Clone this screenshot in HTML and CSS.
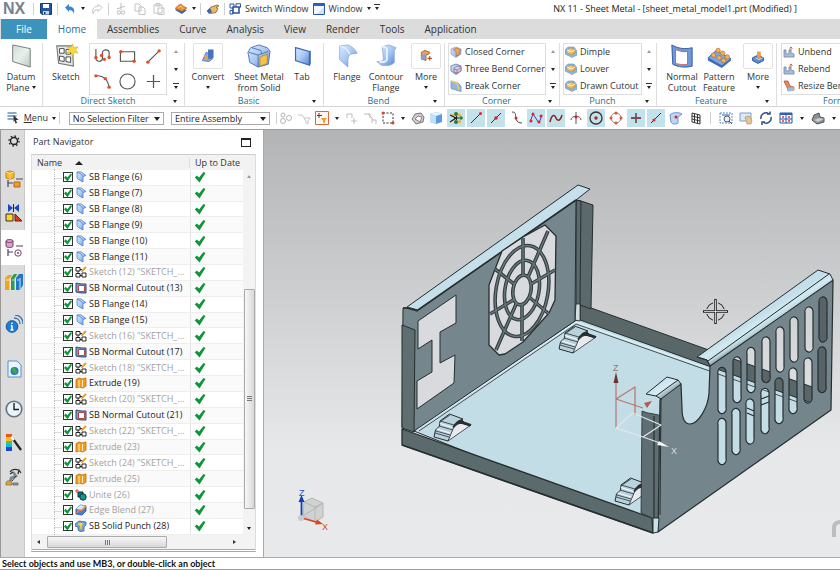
FILE: index.html
```html
<!DOCTYPE html>
<html lang="en">
<head>
<meta charset="utf-8">
<title>NX 11 - Sheet Metal</title>
<link rel="stylesheet" href="styles.css">
</head>
<body>
<svg class="defs" aria-hidden="true">
  <defs>
    <linearGradient id="blue" x1="0" y1="0" x2="1" y2="1"><stop offset="0" stop-color="#dceaff"/><stop offset=".5" stop-color="#a9c8f2"/><stop offset="1" stop-color="#5583d3"/></linearGradient>
    <linearGradient id="gold" x1="0" y1="0" x2="1" y2="1"><stop offset="0" stop-color="#fde7a0"/><stop offset="1" stop-color="#e39a2c"/></linearGradient>
    <linearGradient id="glass" x1="0" y1="0" x2="1" y2="1"><stop offset="0" stop-color="#cfdcd6"/><stop offset=".5" stop-color="#eaf0ec"/><stop offset="1" stop-color="#b9c9c0"/></linearGradient>
  </defs>
  <symbol id="i-flange" viewBox="0 0 12 12"><path d="M2 1 6 .8l5 3.700-3 1V11L3.500 8.500 2 7z" fill="url(#blue)" stroke="#4a83d4" stroke-width=".8"/><path d="M2 1 6 3l2 2.500" fill="none" stroke="#2f6bc4" stroke-width=".6"/></symbol>
  <symbol id="i-sketch" viewBox="0 0 12 12"><path d="M1 1.500h4v3.500H1zM1 7.500h4V11H1zM7 7h4v4H7zM5 3.500h2M3 5v2.500M5 9.500h2" fill="#fff" stroke="#222"/><path d="m7 5 4-4" stroke="#e5a020" stroke-width="2"/><path d="m6.500 5.500 1-.5" stroke="#c33"/></symbol>
  <symbol id="i-cutout" viewBox="0 0 12 12"><path d="M1 1c4 1 6 1 10 1v9c-4 0-7 0-10-1z" fill="#7f9fd2" stroke="#27477e"/><path d="M3.500 3.500h6v6h-6z" fill="#fff" stroke="#b04840"/></symbol>
  <symbol id="i-extrude" viewBox="0 0 12 12"><path d="M1 2.500 4 1l3 1 4-1v8l-3 2-4-1-3 1z" fill="#f39a1c" stroke="#c36d06" stroke-width=".8"/><path d="M4 3v7M7.500 3v7" stroke="#fff0c0" stroke-width="1"/></symbol>
  <symbol id="i-unite" viewBox="0 0 12 12"><path d="M3 3h5v5H3z" fill="#12706e" stroke="#063c40"/><circle cx="8" cy="8" r="3.200" fill="#179492" stroke="#063c40"/><path d="M2 0v4M0 2h4" stroke="#d44"/></symbol>
  <symbol id="i-blend" viewBox="0 0 12 12"><path d="m1 5 4-4 6 1v5l-4 4-6-1z" fill="#4a7de0" stroke="#274c9c" stroke-width=".8"/><path d="m1 5 4-4 6 1-4 4z" fill="#d8e6ff"/><path d="M2 9c1-3 3-3 5-3l4-4" fill="none" stroke="#f08a20" stroke-width="1.500"/></symbol>
  <symbol id="i-punch" viewBox="0 0 12 12"><path d="m0 4 4-3 7 1v3L9 7v4l-4 .5L3 10V7L0 6z" fill="#6ea6ea" stroke="#2e62ad" stroke-width=".8"/><path d="m2 4 3-1.500 4 1L7 5.500v4l-2-.5V6z" fill="#f8d568" stroke="#b98a20" stroke-width=".5"/></symbol>
  <symbol id="i-tick" viewBox="0 0 12 12"><path d="m.8 6.500 2-2 2.200 2L9.500 1l2 1-6 9.500z" fill="#11953a"/></symbol>
  <symbol id="i-corner" viewBox="0 0 12 12"><path d="m1 3 5-2 5 2v5l-5 3.500L1 8z" fill="url(#blue)" stroke="#8aa6d8" stroke-width=".8"/><path d="M3 3.500 7 2l4 2-2 2v3L6.500 10 6 6z" fill="#eda45a" stroke="#b8672c" stroke-width=".6"/></symbol>
  <symbol id="i-stamp" viewBox="0 0 12 12"><path d="m0 4 3-3h6l3 4v4l-5 2.500L0 8z" fill="#8cb5e4" stroke="#6b95cc" stroke-width=".6"/><path d="m2 4 4-2 4 2v3L6.500 9 2 7z" fill="url(#gold)" stroke="#b98b3a" stroke-width=".6"/><path d="m2 4 4.500 2L10 4" fill="none" stroke="#fff6cf"/></symbol>
  <symbol id="i-bend" viewBox="0 0 12 12"><path d="M1 4v7h10V8l-3-1V4H6v4H3V4z" fill="#aabfe0" stroke="#6f82a8" stroke-width=".8"/><path d="M8 4V.8M6.500 2.500 8 1l1.500 1.500" fill="none" stroke="#d9663c"/></symbol>
  <symbol id="lug" viewBox="0 0 40 30" overflow="visible">
    <path d="m1 23 1.500-7 4-4L7 7l9.500-7L30 5l-4 2-5 8-1 3-5 9z" fill="#b9d2db" stroke="#263033" stroke-width="1"/>
    <path d="m15 27 5-12c2-4 4-7 8-6l10 2z" fill="#e9eaf0" stroke="#263033" stroke-width=".8"/>
    <path d="m7 7 14 4M6 12l14 4M3 17l14 4M2 19l14 4M8 7l9-6" fill="none" stroke="#263033" stroke-width=".8"/>
    <path d="m7 9.500 12 4M4 15l13 4" stroke="#f2fbff" stroke-width="1.300"/>
    <path d="M20 13c2-4 5-7 9-7l2 2 7 2.500-1 1.500-8-2.500c-3-.5-6 1-8 4z" fill="#263033"/>
  </symbol>
</svg>

<header class="titlebar">
  <strong class="brand">NX</strong><span class="rule"></span>
  <button class="tb" aria-label="Save"><svg viewBox="0 0 12 12"><path d="M.5.5h11v11H2L.5 10z" fill="#2257a5" stroke="#143b78"/><path d="M3 1h6v4H3z" fill="#fff"/><path d="M3 8h6v3.500H3z" fill="#c7d6ea"/><path d="M4 9h1.500v2H4z" fill="#143b78"/></svg></button><span class="rule"></span>
  <button class="tb" aria-label="Undo"><svg viewBox="0 0 12 12"><path d="m1 4.500 4-3.500v2.500c4 0 6 2 5 7.500C9 8 8 7 5 7v2z" fill="#3b86d2"/></svg></button><i class="caret"></i>
  <button class="tb" aria-label="Redo"><svg viewBox="0 0 12 12"><path d="m11 4.500-4-3v2c-4 0-6 2-5 7 1-3 2-4 5-4v2z" fill="none" stroke="#c4c4c4"/></svg></button><span class="rule"></span>
  <button class="tb" aria-label="Cut"><svg viewBox="0 0 12 12" fill="none" stroke="#bdbdbd"><path d="M6 0v7M2 6l8-3"/><circle cx="4" cy="9.500" r="1.700"/><circle cx="8" cy="9.500" r="1.700"/></svg></button>
  <button class="tb" aria-label="Copy"><svg viewBox="0 0 12 12" fill="#fff" stroke="#c4c4c4"><path d="M1 1h4l2 2v5H1zM5 4h4l2 2v5.500H5z"/></svg></button>
  <button class="tb" aria-label="Paste"><svg viewBox="0 0 12 12" fill="#fff" stroke="#c4c4c4"><path d="M1 2h8v8H1zM3 .5h4V3H3zM5 5h6v6.500H5z"/></svg></button>
  <button class="tb push" aria-label="Command finder"><svg viewBox="0 0 12 12"><path d="m0 7 4-2 8 2-5 4z" fill="#3567b0"/><path d="m0 5.500 3-3L6 1l2 2 4 2-5 3.500z" fill="#eb8a2a" stroke="#b85f12" stroke-width=".6"/><path d="m3 5 3-2 2 3" fill="none" stroke="#ffd48c"/></svg></button><i class="caret"></i><span class="rule"></span>
  <button class="tb" aria-label="Touch mode"><svg viewBox="0 0 12 12"><path d="m0 8 4-4 6-2 2 1-3 1.500 2 1-2 4-5 1z" fill="#eab766" stroke="#73501e" stroke-width=".7"/><path d="m0 8 3-3 2 4-3 2z" fill="#3e65a8"/></svg></button><span class="rule"></span>
  <button class="named"><svg viewBox="0 0 12 12" fill="#fff" stroke="#2b56a0"><path d="M1 1h4v4H1zM7 .8h4.500v3.500H7zM1 7.500h3V11H1z"/><path d="M4 4h6v6H4z" stroke-width="1.600"/></svg>Switch Window</button>
  <button class="named"><svg viewBox="0 0 12 12"><path d="M.5.500h11v11H.5z" fill="#f4f8ff" stroke="#2a55a6"/><path d="M.5.500h11v2.500H.5z" fill="#2a62c4"/><path d="M11 4v7H4z" fill="#cfe0f7"/></svg>Window<i class="caret"></i><i class="caret bar"></i></button>
  <h1>NX 11 - Sheet Metal - [sheet_metal_model1.prt (Modified) ]</h1>
</header>

<nav class="tabs">
  <button class="file">File</button><button class="active">Home</button><button>Assemblies</button><button>Curve</button><button>Analysis</button><button>View</button><button>Render</button><button>Tools</button><button>Application</button>
</nav>

<section class="ribbon">
  <div class="group datum"><div class="body">
    <button class="big"><svg viewBox="0 0 26 26"><path d="M4 1l19 4v20L4 19z" fill="url(#glass)" stroke="#6c7a73"/></svg><span>Datum<br>Plane <i class="caret"></i></span></button>
  </div></div>
  <div class="group direct"><div class="body">
    <button class="big"><svg viewBox="0 0 26 26"><path d="M3 2h17l1 22-16-3z" fill="#e4e8e8" stroke="#777" stroke-width="1.200"/><path d="M6 5h5v5H6zM13 6h5v5h-5zM6 13l5 1v5l-5-1zM13 14h5v6l-5-1z" fill="#fff" stroke="#444"/><path d="m20 0 1.500 4L26 3l-2.500 3.500L26 10l-4-1-2 4-1.500-4L14 10l2.500-3.500L14 3l4 1z" fill="#f8d93c" stroke="#d8a722" stroke-width=".6"/></svg><span>Sketch</span></button>
    <div class="gallery">
      <button aria-label="Profile"><svg viewBox="0 0 18 18" fill="none" stroke="#555" stroke-width="1.200"><path d="M2 1v9a3.500 3.500 0 0 0 7 1V5c0-4 7-4 7 0v6"/><g fill="#e0502c" stroke="none"><circle cx="2" cy="10" r="1.800"/><circle cx="8" cy="8" r="1.800"/><circle cx="11" cy="12" r="1.800"/><circle cx="16" cy="10" r="1.800"/></g></svg></button>
      <button aria-label="Rectangle"><svg viewBox="0 0 18 18" fill="none" stroke="#555" stroke-width="1.200"><path d="M1.500 4h15v10h-15z"/><g fill="#e0502c" stroke="none"><circle cx="2" cy="4" r="1.800"/><circle cx="16" cy="14" r="1.800"/></g></svg></button>
      <button aria-label="Line"><svg viewBox="0 0 18 18" fill="none" stroke="#555" stroke-width="1.200"><path d="M3 15 15 3"/><g fill="#e0502c" stroke="none"><circle cx="3" cy="15" r="1.800"/><circle cx="15" cy="3" r="1.800"/></g></svg></button>
      <button aria-label="Arc"><svg viewBox="0 0 18 18" fill="none" stroke="#555" stroke-width="1.200"><path d="M2 3c8-1 13 4 14 13"/><g fill="#e0502c" stroke="none"><circle cx="2" cy="3" r="1.800"/><circle cx="12" cy="6" r="1.800"/><circle cx="16" cy="15" r="1.800"/></g></svg></button>
      <button aria-label="Circle"><svg viewBox="0 0 18 18" fill="none" stroke="#555" stroke-width="1.200"><circle cx="9" cy="9" r="8"/></svg></button>
      <button aria-label="Point"><svg viewBox="0 0 18 18" fill="none" stroke="#555" stroke-width="1.300"><path d="M9 2v14M2 9h14"/></svg></button>
    </div>
    <div class="scroll"><i class="caret up"></i><i class="caret"></i><i class="caret bar"></i></div>
  </div><footer><span>Direct Sketch</span><i class="caret"></i></footer></div>
  <div class="group basic"><div class="body">
    <button class="big framed"><svg viewBox="0 0 26 26"><path d="m7 18 4-9 5 2 2 5-4 3z" fill="#90a9da" stroke="#5b78b5"/><path d="M13 6h6v9l-6 2z" fill="#4474c0"/><path d="m8 11 5 3 1 4-4-2z" fill="#e5a050"/></svg><span>Convert<br><i class="caret"></i></span></button>
    <button class="big"><svg viewBox="0 0 26 26"><path d="m1 9 3-5 9-3 9 3 3 4-2 14-11 3L3 20z" fill="url(#blue)" stroke="#4c72b8"/><path d="m2 9 10 3 11-4M12 12v13M5 4l10 3 1 4" fill="none" stroke="#4c72b8"/><path d="m14 14 8-3v10l-8 3z" fill="#f5c34c" stroke="#bd8a28"/></svg><span>Sheet Metal<br>from Solid</span></button>
    <button class="big"><svg viewBox="0 0 26 26"><path d="m6 4 15 4v15L6 18z" fill="url(#blue)" stroke="#3a6abb" stroke-width="1.300"/><path d="m21 8 1.500-1v15L21 23" fill="#3767b3"/></svg><span>Tab</span></button>
  </div><footer><span>Basic</span><i class="caret"></i></footer></div>
  <div class="group bend"><div class="body">
    <button class="big"><svg viewBox="0 0 26 26"><path d="m5 2 9-1c4 1 8 5 10 9l-7 1c-2 1-3 3-3 7v7l-9-8z" fill="url(#blue)" stroke="#7f9fce" stroke-width=".7"/><path d="M5 2c4 0 9 4 11 9" fill="none" stroke="#e8f2ff" stroke-width="1.500"/></svg><span>Flange</span></button>
    <button class="big"><svg viewBox="0 0 26 26"><path d="m9 3 7-2 8 3-2 3v13c-2 3-8 4-14 3l-5-4c6 0 8-1 7-5z" fill="url(#blue)" stroke="#7f9fce" stroke-width=".7"/><path d="M9 3c4 0 6 2 5 5v8c0 4-5 4-8 3" fill="none" stroke="#e8f2ff" stroke-width="2"/></svg><span>Contour<br>Flange</span></button>
    <button class="big framed"><svg viewBox="0 0 26 26"><path d="M8 9l4-2 5 2-1 2-3 1v6l-5-2z" fill="#f0a155" stroke="#a15f25"/><path d="m8 13 4-3v6l-4 2z" fill="#7fa4da"/><path d="M17 13v5M14.500 15.500h5" stroke="#c54f22" stroke-width="1.300"/></svg><span>More<br><i class="caret"></i></span></button>
  </div><footer><span>Bend</span><i class="caret"></i></footer></div>
  <div class="group corner"><div class="body">
    <div class="list">
      <button><svg><use href="#i-corner"/></svg>Closed Corner</button>
      <button><svg viewBox="0 0 12 12"><path d="m1 3 5-2 5 2v5l-5 3.500L1 8z" fill="url(#blue)" stroke="#6d8cc8"/><path d="m4 5 3-2 4 1v4l-4 2-3-1z" fill="#c6d4ef" stroke="#9a6a7c" stroke-width=".8"/><path d="m4 6 3 1 4-2M7 7v3" fill="none" stroke="#b46b62" stroke-width=".8"/></svg>Three Bend Corner</button>
      <button><svg viewBox="0 0 12 12"><path d="m1 1 7 2 3 3v5.500L1 8.500z" fill="#8fb6e6" stroke="#6a94ca" stroke-width=".8"/><path d="m1 1 6 2 2 7" fill="none" stroke="#f1c766" stroke-width="1.500"/></svg>Break Corner</button>
    </div><div class="scroll"><i class="caret up"></i><i class="caret"></i><i class="caret bar"></i></div>
  </div><footer><span>Corner</span><i class="caret"></i></footer></div>
  <div class="group punch"><div class="body">
    <div class="list">
      <button><svg><use href="#i-stamp"/></svg>Dimple</button>
      <button><svg><use href="#i-stamp"/></svg>Louver</button>
      <button><svg><use href="#i-stamp"/></svg>Drawn Cutout</button>
    </div><div class="scroll"><i class="caret up"></i><i class="caret"></i><i class="caret bar"></i></div>
  </div><footer><span>Punch</span><i class="caret"></i></footer></div>
  <div class="group feature"><div class="body">
    <button class="big"><svg viewBox="0 0 26 26"><path d="M2 1c7 4 14 5 22 3v20c-8 2-15 1-21-2z" fill="#6f98d8" stroke="#2f5596"/><path d="M6 6c5 2 9 3 13 2v14c-4 1-9 0-13-1z" fill="#fff" stroke="#b6665c"/></svg><span>Normal<br>Cutout</span></button>
    <button class="big"><svg viewBox="0 0 26 26"><path d="m1 15 9-8 16 9-10 8z" fill="#7da5e4" stroke="#3a64ab"/><path d="m1 15 15 8 10-7v2l-10 8L1 18z" fill="#3d6cbb"/><g fill="#f0b159" stroke="#b3702a" stroke-width=".7"><circle cx="7" cy="12" r="2.400"/><circle cx="12" cy="7" r="2.400"/><circle cx="13" cy="15" r="2.400"/><circle cx="17" cy="10" r="2.400"/><circle cx="18" cy="18" r="2.400"/><circle cx="22" cy="14" r="2.400"/></g></svg><span>Pattern<br>Feature</span></button>
    <button class="big framed"><svg viewBox="0 0 26 26"><path d="m7 15 6-3 6 3v3l-6 3-6-3z" fill="#5c8bd2" stroke="#31589c"/><path d="M12 8h4v8h-4z" fill="#f29a3c"/><path d="m10 15 4 2 4-2" fill="none" stroke="#c9dcf8"/></svg><span>More<br><i class="caret"></i></span></button>
  </div><footer><span>Feature</span><i class="caret"></i></footer></div>
  <div class="group form"><div class="body">
    <div class="list">
      <button><svg><use href="#i-bend"/></svg>Unbend</button>
      <button><svg><use href="#i-bend"/></svg>Rebend</button>
      <button><svg viewBox="0 0 12 12"><path d="M1 1c1 4 4 6 4 10l6-1V7L7 6 5 1z" fill="#e9885c" stroke="#a5502c" stroke-width=".7"/><path d="m5 8 6-1v4H5z" fill="#9db9e2"/></svg>Resize Bend</button>
    </div>
  </div><footer><span>Forming</span></footer></div>
</section>

<section class="toolbar">
  <button class="menu"><svg viewBox="0 0 12 12"><path d="M0 1h9M0 4h9M0 7h6" stroke="#8aa9cf" stroke-width="2"/><path d="m6 3 5 5H8.500l1 3-1.500.5-1-3L6 10z" fill="#333"/></svg><span><u>M</u>enu</span><i class="caret"></i></button><span class="rule"></span>
  <label class="pick filter"><select aria-label="Selection filter"><option>No Selection Filter</option></select></label>
  <label class="pick scope"><select aria-label="Selection scope"><option>Entire Assembly</option></select></label>
  <span class="rule"></span>
  <div class="tools early">
    <button aria-label="Interpart"><svg viewBox="0 0 14 14" fill="none" stroke="#b5b5b5"><circle cx="4" cy="4" r="2"/><circle cx="4" cy="10" r="2.500"/><circle cx="10" cy="7" r="2.500"/></svg></button>
    <button aria-label="Reset filter"><svg viewBox="0 0 14 14" fill="none" stroke="#c5c5c5"><path d="M1 4h4l2 3M7 7h6l-2 3v3l-2-1v-2z"/></svg></button>
    <button aria-label="General selection"><svg viewBox="0 0 14 14"><path d="M.5.500h13v13H.5z" fill="#fff7f0" stroke="#d7684a"/><path d="M4 2v5M2 4.500h5" stroke="#6e3430"/><path d="M6 7h6l-2 2.500v3l-2-1v-2z" fill="#f29d27"/></svg></button><i class="caret"></i>
    <button aria-label="Find"><svg viewBox="0 0 14 14" fill="none" stroke="#bdbdbd"><path d="M2 7V3h5v4M9 7v6M6 10h6"/></svg></button>
    <button aria-label="Deselect"><svg viewBox="0 0 14 14" fill="none" stroke="#bdbdbd"><path d="M1 3h6v4M5 3l4 4v5M9 9h4v4"/></svg></button>
    <button aria-label="Rectangle select"><svg viewBox="0 0 14 14" fill="none" stroke="#333"><path d="M2 2h10v10H2z" stroke-dasharray="2 1.500"/><g fill="#d94a2c" stroke="none"><circle cx="2" cy="2" r="1.500"/><circle cx="12" cy="12" r="1.500"/></g></svg></button><i class="caret"></i>
    <button aria-label="Wireframe"><svg viewBox="0 0 14 14"><path d="m1 8 3-5 6-1 3 4-1 5-7 2z" fill="#c9d0da" stroke="#777"/><path d="m4 8 3-3 4 1-2 5z" fill="#fff" stroke="#a57070"/></svg></button>
    <button aria-label="Shaded"><svg viewBox="0 0 14 14"><path d="m1 3 7-2 5 2v8l-6 2-6-2z" fill="#5c9ae2"/><path d="m1 3 6 2v8l-6-2z" fill="#bfe0fb"/><path d="m1 3 7-2 5 2-6 2z" fill="#e6f4ff"/></svg></button>
  </div>
  <div class="tools snaps">
    <button class="on" aria-label="Enable snap"><svg viewBox="0 0 14 14"><g fill="#2b7a3c"><circle cx="7" cy="3" r="2"/><circle cx="12" cy="7" r="1.800"/><circle cx="7" cy="11" r="2"/></g><g fill="#e7b426"><circle cx="4" cy="4.500" r="1.600"/><circle cx="10.500" cy="4" r="1.600"/><circle cx="10.500" cy="10.500" r="1.600"/></g><path d="m1 4 6 3-6 4M5 7h5M7.500 5v4" fill="none" stroke="#222" stroke-width="1.200"/></svg></button>
    <button class="on" aria-label="End point"><svg viewBox="0 0 14 14"><path d="M2 12 12 2" stroke="#333"/><circle cx="11.500" cy="2.500" r="1.500" fill="#d23"/></svg></button>
    <button class="on" aria-label="Mid point"><svg viewBox="0 0 14 14"><path d="M2 12 12 2" stroke="#333"/><circle cx="7" cy="7" r="1.800" fill="#d23"/></svg></button>
    <button aria-label="Control point"><svg viewBox="0 0 14 14" fill="none"><path d="M3 1c5 0 3 4 4 7s3 4 6 4" stroke="#444"/><circle cx="7" cy="7" r="1.500" fill="#d23"/></svg></button>
    <button class="on" aria-label="Intersection"><svg viewBox="0 0 14 14" fill="none"><path d="m1 11 3-8 6 9 3-8" stroke="#5636a0"/><g fill="#d23"><circle cx="4" cy="3" r="1.500"/><circle cx="2" cy="10" r="1.500"/><circle cx="10" cy="11" r="1.500"/><circle cx="12" cy="5" r="1.500"/></g></svg></button>
    <button class="on" aria-label="Point on curve"><svg viewBox="0 0 14 14" fill="none"><path d="M1 11C3 2 6 4 7 7s4 4 6-3" stroke="#8b2320" stroke-width="1.500"/></svg></button>
    <button aria-label="Pole"><svg viewBox="0 0 14 14" fill="none"><path d="M2 9c0-5 10-5 10 0M7 1v12" stroke="#555"/><circle cx="7" cy="6" r="1.500" fill="#d23"/></svg></button>
    <button class="on" aria-label="Arc center"><svg viewBox="0 0 14 14" fill="none"><circle cx="7" cy="7" r="6" stroke="#333" stroke-width="1.300"/><circle cx="7" cy="7" r="1.700" fill="#a22"/></svg></button>
    <button aria-label="Quadrant"><svg viewBox="0 0 14 14" fill="none"><circle cx="7" cy="7" r="5" stroke="#888"/><g fill="#dc5038"><circle cx="7" cy="2" r="1.500"/><circle cx="7" cy="12" r="1.500"/><circle cx="2" cy="7" r="1.500"/><circle cx="12" cy="7" r="1.500"/></g></svg></button>
    <button class="on" aria-label="Existing point"><svg viewBox="0 0 14 14"><path d="M7 2v10M2 7h10" stroke="#333" stroke-width="1.300"/><circle cx="7" cy="7" r="1.300" fill="#d23"/></svg></button>
    <button class="on" aria-label="On curve"><svg viewBox="0 0 14 14"><path d="M2 12 12 2" stroke="#333"/><circle cx="5" cy="9" r="1.500" fill="#d23"/></svg></button>
    <button aria-label="On face"><svg viewBox="0 0 14 14"><path d="M1 4c3-3 8-3 12-1l-4 3v6c-3 2-6 1-7-1z" fill="#bcd6f2" stroke="#6b92c7"/><circle cx="7" cy="6" r="1.500" fill="#d23"/></svg></button>
    <button aria-label="Grid point"><svg viewBox="0 0 14 14" fill="none" stroke="#333"><path d="m3 2 8 2v9l-8-2zM5.500 2.500v9M8.500 3v9.500M3 5l8 2M3 8l8 2"/></svg></button>
  </div>
  <span class="rule"></span>
  <div class="tools view">
    <button aria-label="Fit"><svg viewBox="0 0 14 14" fill="none"><path d="M1 2h12v10H1z" stroke="#5c8ac8" stroke-dasharray="2 1"/><path d="M3 3h8v2H3z" fill="#8ab0de"/><circle cx="8" cy="8" r="3" stroke="#555" fill="#e8f2fb"/><path d="m10 10 3 3" stroke="#555"/></svg></button>
    <button aria-label="Pan"><svg viewBox="0 0 14 14"><path d="M1 2h11v8H1z" fill="#dce9f6" stroke="#7ba0cc"/><path d="m6 6 4-1 3 4-1 4H8z" fill="#e9c48b" stroke="#a48a5c" stroke-width=".6"/></svg></button>
    <button aria-label="Rotate"><svg viewBox="0 0 14 14" fill="none" stroke="#2d4e8e" stroke-width="1.500"><path d="M2 8a5 5 0 0 1 8-5M12 6a5 5 0 0 1-8 5M8 3h3V.500M6 11H3v3"/></svg></button>
    <button aria-label="View orientation"><svg viewBox="0 0 14 14"><path d="M1 2h12v10H1z" fill="#fff" stroke="#2a55a6"/><path d="M1 2h12v2H1z" fill="#2a62c4"/><path d="M7 4v8M1 8h12" stroke="#2a55a6"/><path d="M3 6h2M9 6h2M3 10h2M9 10h2" stroke="#d33" stroke-width="1.500"/></svg></button><i class="caret"></i>
    <button aria-label="Render style"><svg viewBox="0 0 14 14"><path d="m1 9 2-5 5-2 1 4 4 1v4l-7 2z" fill="#8a9095" stroke="#555"/><path d="m3 9 5-2 5 1-6 3z" fill="#c8cdd0"/></svg></button><i class="caret"></i>
  </div>
</section>

<main>
  <aside class="rail">
    <button aria-label="Options"><svg viewBox="0 0 18 18" fill="none" stroke="#222"><circle cx="9" cy="9" r="3.500" stroke-width="1.400"/><circle cx="9" cy="9" r="5" stroke-dasharray="1.600 2.300" stroke-width="1.300"/></svg></button>
    <button aria-label="Assembly navigator"><svg viewBox="0 0 18 18"><path d="m1 2 4-1 4 1v6l-4 1-4-1z" fill="#f3b826" stroke="#c58b0c"/><path d="m1 2 4 1.500L9 2M5 4v5" stroke="#ffe48a" fill="none"/><path d="M3 10v7M3 13h5M11 9h7" stroke="#446" stroke-width="1.200"/><path d="M9 12h6v5H9z" fill="#f09c22" stroke="#b36c0a"/></svg></button>
    <button aria-label="Constraint navigator"><svg viewBox="0 0 18 18"><path d="M3 0v8l5-4zM14 0v8L9 4z" fill="#1a47c6"/><path d="M8.500 0v8" stroke="#222"/><path d="M1 10h7v7H1z" fill="#f9d72c" stroke="#333"/><path d="m10 10 7 7h-7z" fill="#db3a22" stroke="#701a10"/></svg></button>
    <button class="current" aria-label="Part navigator"><svg viewBox="0 0 18 18"><path d="M1 2c0-2 7-2 7 0v5c0 2-7 2-7 0z" fill="#d6a2c6" stroke="#7b3c6c"/><path d="M1 2c0 2 7 2 7 0" fill="none" stroke="#7b3c6c"/><path d="M3 10v7M3 13h5M11 7h7" stroke="#446" stroke-width="1.200"/><circle cx="13" cy="14" r="3.200" fill="#fff" stroke="#7b3c6c"/><circle cx="13" cy="14" r="1" fill="#7b3c6c"/></svg></button>
    <button class="library" aria-label="Reuse library"><svg viewBox="0 0 18 18"><path d="m0 5 3-3h4L5 5v12H0z" fill="#f0a31e"/><path d="m6 5 3-4h3L10 5v12H6z" fill="#2f9b4e"/><path d="m11 5 3-4h4v11l-3 5h-4z" fill="#2178c8"/><path d="M1 7h3M7 7h2M12 7h2M5 5v12M10 5v12M15 5v12" stroke="#fff" stroke-width=".8"/></svg></button>
    <button class="tall" aria-label="HD3D tools"><svg viewBox="0 0 18 18" fill="none"><circle cx="7" cy="11.500" r="5.800" fill="#1e7cd2" stroke="#0f549c"/><path d="M7 10.500V15M5.500 15h3M5.800 10.500H7M6.300 8.200h1.400" stroke="#fff" stroke-width="1.500"/><path d="M9 3c3 0 6 2 6 6M10 0c5 0 8 4 8 9" stroke="#3b6fa8" stroke-width="1.300"/></svg></button>
    <button class="mid" aria-label="Web browser"><svg viewBox="0 0 18 18"><path d="M3 1h9l4 4v12H3z" fill="#eaf4ff" stroke="#5b8fca"/><circle cx="9.500" cy="11" r="4" fill="#2a72c6"/><path d="M7 9c2-3 4 0 5 2s-2 4-3 2-2 0-2-4z" fill="#3ea84c"/></svg></button>
    <button class="mid" aria-label="History"><svg viewBox="0 0 18 18" fill="none"><circle cx="9" cy="9" r="7.800" fill="#e8f3fb" stroke="#66727e" stroke-width="1.600"/><path d="M9 3v6.500h5" stroke="#222" stroke-width="1.400"/></svg></button>
    <button class="short" aria-label="System materials"><svg viewBox="0 0 18 18"><path d="M1 0h6v4H1z" fill="#e52"/><path d="M1 3h6v4H1z" fill="#fb2"/><path d="M1 7h6v3H1z" fill="#4c4"/><path d="M1 10h6v4H1z" fill="#1bd"/><path d="M1 13h6v4H1z" fill="#24c"/><path d="m8 5 8 11" stroke="#222" stroke-width="2.200"/><path d="m6 3 3 3" stroke="#fff" stroke-width="2"/></svg></button>
    <button class="mid" aria-label="Process studio"><svg viewBox="0 0 18 18" fill="none"><path d="m5 15 1-5 5-2-3-4" stroke="#7b8792" stroke-width="2.500"/><path d="M5 4c2-3 6-3 9-2l2 3M8 4l-3 2M14 2l-1 4" stroke="#333" stroke-width="1.300"/><path d="M11 8 7 13" stroke="#333" stroke-width="1"/><path d="M1 15c0-3 6-3 6 0v2H1z" fill="#e0a03a" stroke="#7a6a50" stroke-width=".7"/><path d="M8 15h5v2H8z" fill="#99a4ae" stroke="#555" stroke-width=".7"/></svg></button>
  </aside>

  <section class="navigator">
    <header><h2>Part Navigator</h2><button class="restore" aria-label="Restore"></button></header>
    <div class="frame">
      <div class="head"><span>Name <i class="sort"></i></span><span>Up to Date</span></div>
      <div class="scroller">
        <table>
          <tbody>
            <tr><td><label><input type="checkbox" checked><svg><use href="#i-flange"/></svg>SB Flange (6)</label></td><td><svg><use href="#i-tick"/></svg></td></tr>
            <tr><td><label><input type="checkbox" checked><svg><use href="#i-flange"/></svg>SB Flange (7)</label></td><td><svg><use href="#i-tick"/></svg></td></tr>
            <tr><td><label><input type="checkbox" checked><svg><use href="#i-flange"/></svg>SB Flange (8)</label></td><td><svg><use href="#i-tick"/></svg></td></tr>
            <tr><td><label><input type="checkbox" checked><svg><use href="#i-flange"/></svg>SB Flange (9)</label></td><td><svg><use href="#i-tick"/></svg></td></tr>
            <tr><td><label><input type="checkbox" checked><svg><use href="#i-flange"/></svg>SB Flange (10)</label></td><td><svg><use href="#i-tick"/></svg></td></tr>
            <tr><td><label><input type="checkbox" checked><svg><use href="#i-flange"/></svg>SB Flange (11)</label></td><td><svg><use href="#i-tick"/></svg></td></tr>
            <tr class="dim"><td><label><input type="checkbox" checked><svg><use href="#i-sketch"/></svg>Sketch (12) "SKETCH_...</label></td><td><svg><use href="#i-tick"/></svg></td></tr>
            <tr><td><label><input type="checkbox" checked><svg><use href="#i-cutout"/></svg>SB Normal Cutout (13)</label></td><td><svg><use href="#i-tick"/></svg></td></tr>
            <tr><td><label><input type="checkbox" checked><svg><use href="#i-flange"/></svg>SB Flange (14)</label></td><td><svg><use href="#i-tick"/></svg></td></tr>
            <tr><td><label><input type="checkbox" checked><svg><use href="#i-flange"/></svg>SB Flange (15)</label></td><td><svg><use href="#i-tick"/></svg></td></tr>
            <tr class="dim"><td><label><input type="checkbox" checked><svg><use href="#i-sketch"/></svg>Sketch (16) "SKETCH_...</label></td><td><svg><use href="#i-tick"/></svg></td></tr>
            <tr><td><label><input type="checkbox" checked><svg><use href="#i-cutout"/></svg>SB Normal Cutout (17)</label></td><td><svg><use href="#i-tick"/></svg></td></tr>
            <tr class="dim"><td><label><input type="checkbox" checked><svg><use href="#i-sketch"/></svg>Sketch (18) "SKETCH_...</label></td><td><svg><use href="#i-tick"/></svg></td></tr>
            <tr><td><label><input type="checkbox" checked><svg><use href="#i-extrude"/></svg>Extrude (19)</label></td><td><svg><use href="#i-tick"/></svg></td></tr>
            <tr class="dim"><td><label><input type="checkbox" checked><svg><use href="#i-sketch"/></svg>Sketch (20) "SKETCH_...</label></td><td><svg><use href="#i-tick"/></svg></td></tr>
            <tr><td><label><input type="checkbox" checked><svg><use href="#i-cutout"/></svg>SB Normal Cutout (21)</label></td><td><svg><use href="#i-tick"/></svg></td></tr>
            <tr class="dim"><td><label><input type="checkbox" checked><svg><use href="#i-sketch"/></svg>Sketch (22) "SKETCH_...</label></td><td><svg><use href="#i-tick"/></svg></td></tr>
            <tr class="dim"><td><label><input type="checkbox" checked><svg><use href="#i-extrude"/></svg>Extrude (23)</label></td><td><svg><use href="#i-tick"/></svg></td></tr>
            <tr class="dim"><td><label><input type="checkbox" checked><svg><use href="#i-sketch"/></svg>Sketch (24) "SKETCH_...</label></td><td><svg><use href="#i-tick"/></svg></td></tr>
            <tr class="dim"><td><label><input type="checkbox" checked><svg><use href="#i-extrude"/></svg>Extrude (25)</label></td><td><svg><use href="#i-tick"/></svg></td></tr>
            <tr class="dim"><td><label><input type="checkbox" checked><svg><use href="#i-unite"/></svg>Unite (26)</label></td><td><svg><use href="#i-tick"/></svg></td></tr>
            <tr class="dim"><td><label><input type="checkbox" checked><svg><use href="#i-blend"/></svg>Edge Blend (27)</label></td><td><svg><use href="#i-tick"/></svg></td></tr>
            <tr><td><label><input type="checkbox" checked><svg><use href="#i-punch"/></svg>SB Solid Punch (28)</label></td><td><svg><use href="#i-tick"/></svg></td></tr>
          </tbody>
        </table>
        <div class="vbar"><i class="caret up"></i><div class="thumb"></div><i class="caret"></i></div>
      </div>
      <div class="hbar"><i class="caret left"></i><div class="thumb"></div><i class="caret right"></i></div>
    </div>
  </section>

  <section class="viewport">
    <svg viewBox="264 130 576 427" preserveAspectRatio="xMinYMin meet" stroke-linejoin="round" role="img" aria-label="Sheet metal model">
      <defs>
        <linearGradient id="lip" gradientUnits="userSpaceOnUse" x1="765" y1="312" x2="774" y2="326"><stop offset="0" stop-color="#c4dfe9"/><stop offset=".4" stop-color="#d3eaf2"/><stop offset=".7" stop-color="#bcd6df"/><stop offset="1" stop-color="#74878d"/></linearGradient>
        <linearGradient id="lip2" gradientUnits="userSpaceOnUse" x1="658" y1="382" x2="668" y2="396"><stop offset="0" stop-color="#c4dfe9"/><stop offset=".5" stop-color="#d8edf4"/><stop offset="1" stop-color="#7d9198"/></linearGradient>
        <g id="grille">
          <ellipse cx="522" cy="291" rx="26" ry="46" transform="rotate(10 522 291)"/>
          <ellipse cx="522" cy="290" rx="17" ry="30" transform="rotate(10 522 290)"/>
          <ellipse cx="522" cy="290" rx="9" ry="15" transform="rotate(10 522 290)"/>
          <path d="M523 238v38M522 304v37M548 231l-20 46M517 302l-21 48M495 269l19 15M529 297l20 17M555 270l-24 14M490 314l25-15"/>
        </g>
      </defs>
      <g stroke="#252e30">
        <path d="M580 304 815 388v20L580 321z" fill="#5a6769"/>
        <path d="M815 280h14v128h-14z" fill="#566467" stroke="none"/>
        <path d="m414 431 161-110 5-1 243 87-166 121z" fill="#c3dde7"/>
        <path d="m419 431 157-107 250 88" fill="none" stroke-width=".8"/>
        <path d="m416 430 160-108 131 46" fill="none" stroke="#dceff6" stroke-width="1.500"/>
        <path d="m576 200 5 1 12 4-2 104-11-4-4 15z" fill="#5b696c"/>
        <path d="m576 200 5 1-1 104" fill="none"/>
        <path d="M576 304h4v17l-5-1z" fill="#d5e0e4" stroke-width=".8"/>
        <path d="M403 308h14l159-108-1 121-161 110-12-4z" fill="#75868c"/>
        <path d="m402 325 13 5-1 102-12-4z" fill="#5f6e71"/>
        <path d="m407 307 171-122 12 4-14 11-158 110z" fill="#c5e0ea"/>
        <path d="m418 310 158-110" stroke-width="1.600"/>
        <path d="M403 308h4l11 3" fill="none" stroke-width="1.500"/>
        <path d="m418 321 38-26v28l-16 9v31l15-8-1 28-37 26v-28l15-9v-32l-14 9z" fill="#d9dadd"/>
        <path d="m502 251 21-14 22-12 11 11-1 64-6 13-26 29-18 12-6 1-10-10v-60z" fill="#d9dadd" stroke-width="1.300"/>
        <use href="#grille" fill="none" stroke="#323c3f" stroke-width="3.600"/>
        <use href="#grille" fill="none" stroke="#66767a" stroke-width="1.500"/>
        <use href="#lug" x="433" y="414" width="40" height="30"/>
        <use href="#lug" x="558" y="326" width="40" height="30"/>
        <use href="#lug" x="614" y="478" width="40" height="30"/>
        <path d="m402 429 250 89 1 15-251-88z" fill="#5b6a6c" stroke-width="1.300"/>
        <path d="m402 445 251 88" stroke-width="1.600"/>
        <path d="m642 411 6 2 12 2-1 103-7 0-11-5z" fill="#5f6e72" stroke-width=".8"/>
        <path d="M654 416v101" stroke-width="1.200"/>
        <path d="m646 402 14-6v19l-17-6z" fill="#c3dde7" stroke="none"/>
        <path fill-rule="evenodd" stroke-width="1.200" fill="#74858b" d="M660 400 665 394 681 384 682 408C682 416 684 424 690 424 698 424 708 408 709 393L710 366 833 280 831 410 658 532Z
          M718 374v36a4 5 0 0 0 8-3v-36a4 5 0 0 0-8 3z M733 363v36a4 5 0 0 0 8-3v-35a4 5 0 0 0-8 2z M747 354v35a4 5 0 0 0 8-3v-35a4 5 0 0 0-8 3z M762 343v36a4 5 0 0 0 8-3v-35a4 5 0 0 0-8 2z M776 333v35a4 5 0 0 0 8-2v-35a4 5 0 0 0-8 2z M790 323v35a4 5 0 0 0 8-2v-35a4 5 0 0 0-8 2z M805 313v35a4 5 0 0 0 8-2v-35a4 5 0 0 0-8 2z M819 303v35a4 5 0 0 0 8-2v-35a4 5 0 0 0-8 2z
          M718 425v36a4 5 0 0 0 8-3v-36a4 5 0 0 0-8 3z M732 415v36a4 5 0 0 0 8-3v-36a4 5 0 0 0-8 3z M746 405v35a4 5 0 0 0 8-2v-35a4 5 0 0 0-8 2z M761 395v35a4 5 0 0 0 8-3v-35a4 5 0 0 0-8 3z M775 384v36a4 5 0 0 0 8-3v-35a4 5 0 0 0-8 2z M789 374v36a4 5 0 0 0 8-3v-35a4 5 0 0 0-8 2z M804 364v35a4 5 0 0 0 8-2v-35a4 5 0 0 0-8 2z M818 353v36a4 5 0 0 0 8-3v-35a4 5 0 0 0-8 2z"/>
        <path d="m747 408 7 3m-7 2 7 3m7-17 8-3m-8 9 8-3" fill="none" stroke-width="1.200"/>
        <path d="m697 357 121-87 12 4 3 6-123 86-3-6z" fill="url(#lip)"/>
        <path d="m697 357 10 3 3 6m-2-5 121-87" fill="none"/>
        <path d="m646 394 21-17 11 3 3 4-20 15-5-3z" fill="url(#lip2)"/>
        <path d="m656 396 22-16M661 399l-1 116" fill="none"/>
        <path d="M653 518h6l-1 14-5 1z" fill="#c8e2ec"/>
      </g>
      <g fill="none" stroke-width="1.200">
        <path d="M616 428v-45M616 399l19-12v28M616 399l27 9" stroke="#b5766e"/>
        <path d="m616 428 17-15 28 12-18 12zM643 437l17 6" stroke="#e3e7ea"/>
        <path d="m616 372-2.500 11h5z" fill="#6c3430" stroke="none"/>
        <path d="m652 401-8 2 3 5z" fill="#b5594c" stroke="none"/>
        <path d="m669 447-12-2 2-4z" fill="#f4f4f4" stroke="none"/>
      </g>
      <g class="axis"><text x="613" y="371" fill="#8f7771">Z</text><text x="671" y="454" fill="#d7dcdf">X</text></g>
      <g fill="none" stroke="#222">
        <path d="M715.500 299v25M703 311.500h25" stroke-width="2.500"/><path d="M715.500 300v23M704 311.500h23" stroke="#eee" stroke-width=".8"/>
        <circle cx="715.500" cy="311.500" r="9" stroke-dasharray="9 5.100" stroke-dashoffset="-2.500"/>
      </g>
      <g fill="none">
        <path d="m304 502 8-4 11 5v14l-8 5-12-6z" fill="#cfd2d1" stroke="#b3b7b5"/><path d="m304 502 11 5 8-4M315 507v15M303 516l19-12" stroke="#b3b7b5"/>
        <path d="M301.500 518v-17" stroke="#143eb0" stroke-width="1.800"/><path d="m301.500 495-3 7h6z" fill="#143eb0"/>
        <path d="m302 518 14 4" stroke="#dc4322" stroke-width="1.800"/><path d="m323 524-8 .5 2-5z" fill="#dc4322"/><circle cx="301" cy="518" r="3" fill="#c9cbcc"/>
      </g>
      <g class="axis"><text x="299" y="496" fill="#2450c0">Z</text><text x="322" y="530" fill="#dc4322">X</text></g>
      <path d="M834 537v-9c0-4 2-6 8-6" fill="none" stroke="#bcbdbf" stroke-width="4"/>
    </svg>
  </section>
</main>
<footer class="status">Select objects and use MB3, or double-click an object</footer>
</body>
</html>
```
FILE: styles.css
```css
* { box-sizing: border-box; }
body {
  margin: 0;
  height: 100vh;
  display: flex;
  flex-direction: column;
  overflow: hidden;
  background: #fff;
  color: #333;
  font: 9px/10px "Open Sans", "Noto Sans", sans-serif;
}
button {
  display: flex;
  align-items: center;
  justify-content: center;
  margin: 0;
  padding: 0;
  border: 0;
  background: none;
  color: inherit;
  font: inherit;
}
h1, h2 { margin: 0; font: inherit; }
.defs { position: absolute; width: 0; height: 0; }
.rule { flex: none; width: 1px; height: 12px; background: #d0d0d0; }
.caret {
  flex: none;
  display: inline-block;
  border: 2px solid transparent;
  border-top: 3px solid #222;
  border-bottom: 0;
}
.caret.up { border-top: 0; border-bottom: 3px solid #999; }
.caret.left { border: 2px solid transparent; border-right: 3px solid #333; border-left: 0; }
.caret.right { border: 2px solid transparent; border-left: 3px solid #333; border-right: 0; }
.caret.bar { position: relative; }
.caret.bar::before { content: ""; position: absolute; left: -3px; top: -6px; width: 6px; height: 1px; background: #333; }

.titlebar { flex: none; display: flex; align-items: center; gap: 4px; height: 19px; padding: 0 43px 2px 3px; white-space: nowrap; }
.brand { width: 26px; color: #75838d; font: bold 16px/17px "Liberation Sans", sans-serif; }
.tb svg, .named svg { width: 12px; height: 12px; }
.tb { width: 15px; }
.tb.push { margin-left: 3px; }
.named { gap: 4px; }
.titlebar h1 { margin-left: auto; color: #222; }

.tabs { flex: none; display: flex; height: 20px; padding-left: 1px; background: #dcdcdc; font-size: 10px; }
.tabs button { padding: 0 10px; }
.tabs .file { width: 46px; background: #3e93bc; color: #fff; }
.tabs .active { width: 50px; padding: 0; background: #fff; color: #1d6f98; }

.ribbon {
  flex: none;
  display: grid;
  grid-template-columns: 43px 142px 139px 121px 115px 97px 120px 1fr;
  height: 68px;
  padding: 4px 0 2px;
  overflow: hidden;
  border-bottom: 1px solid #d4d4d4;
}
.group { display: flex; flex-direction: column; min-width: 0; border-right: 1px solid #dedede; }
.group .body { display: grid; height: 53px; }
.group footer { display: flex; align-items: center; height: 10px; color: #27708f; }
.group footer span { flex: 1; text-align: center; }
.group footer .caret { margin-right: 7px; }
.datum .body { grid-template-columns: 1fr; }
.direct .body { grid-template-columns: 46px 78px 1fr; }
.basic .body { grid-template-columns: 46px 56px 30px; }
.bend .body { grid-template-columns: 36px 42px 38px; padding-left: 5px; }
.feature .body { grid-template-columns: 34px 40px 38px; padding-left: 8px; }
.corner .body, .punch .body { grid-template-columns: 1fr 14px; padding-left: 3px; }
.form .body { grid-template-columns: 90px; padding-left: 4px; }
.form { border: 0; }
.form footer span { flex: none; padding-left: 46px; }
.big { flex-direction: column; justify-content: flex-start; gap: 2px; line-height: 11px; white-space: nowrap; }
.big svg { width: 24px; height: 26px; }
.big.framed svg { width: 30px; border: 1px solid #e2e2e2; border-radius: 2px; }
.big .caret { vertical-align: 2px; }
.gallery { display: grid; grid-template-columns: repeat(3, 1fr); height: 52px; border: 1px solid #dedede; }
.gallery svg { width: 17px; height: 17px; }
.scroll { display: flex; flex-direction: column; align-items: center; justify-content: space-between; padding: 7px 0; }
.list { height: 52px; display: grid; grid-template-rows: repeat(3, 1fr); border: 1px solid #dedede; }
.list button { justify-content: flex-start; gap: 3px; padding-left: 1px; white-space: nowrap; }
.list svg { flex: none; width: 12px; height: 12px; }

.toolbar { flex: none; display: flex; align-items: center; height: 23px; border-bottom: 1px solid #9c9c9c; }
.menu { gap: 4px; width: 51px; margin-left: 6px; }
.menu svg { width: 13px; height: 12px; }
.menu + .rule { margin: 0 9px 0 2px; }
.pick { position: relative; margin-right: 7px; }
.pick::after { content: ""; position: absolute; right: 4px; top: 5px; border: 3px solid transparent; border-top: 4px solid #222; border-bottom: 0; pointer-events: none; }
.pick select { display: block; width: 100%; height: 13px; padding: 0 3px; border: 1px solid #aaa; border-radius: 0; appearance: none; background: #fff; color: #222; font: inherit; line-height: 11px; }
.filter { width: 96px; }
.scope { width: 100px; margin-right: 6px; }
.tools { display: flex; align-items: center; }
.tools button { width: 18px; height: 18px; }
.tools svg { width: 14px; height: 14px; }
.tools .caret { margin: 0 4px; }
.early { width: 171px; }
.snaps { gap: 2px; }
.snaps .on { background: #c3e2ec; }
.snaps + .rule { margin: 0 5px; }
.view button { width: 20px; }

main { flex: 1; min-height: 0; display: grid; grid-template-columns: 25px 239px 1fr; }
.rail { background: #dcdcdc; border-left: 1px solid #999; border-right: 1px solid #c8c8c8; display: flex; flex-direction: column; }
.rail button { flex: none; width: 25px; height: 34px; }
.rail button:first-child { height: 22px; margin-bottom: 10px; }
.rail svg { width: 18px; height: 18px; }
.rail .current { height: 35px; background: #fff; }
.rail .tall { height: 50px; }
.rail .mid { height: 40px; }
.rail .short { height: 28px; }

.navigator { display: flex; flex-direction: column; padding: 0 7px 5px 6px; border-right: 1px solid #aaa; }
.navigator > header { display: flex; align-items: center; justify-content: space-between; height: 24px; padding: 0 5px 0 2px; }
.restore { width: 10px; height: 9px; border: 1px solid #222; border-top-width: 2px; }
.frame { flex: 1; min-height: 0; display: flex; flex-direction: column; border: 1px solid #ddd; border-top-color: #ccc; border-bottom: 3px double #aaa; }
.head { flex: none; display: flex; align-items: center; height: 15px; background: #f2f2f2; }
.head span { padding-left: 5px; }
.head span:first-child { width: 158px; border-right: 1px solid #ddd; }
.sort { display: inline-block; margin-left: 10px; border: 4px solid transparent; border-top: 0; border-bottom: 4px solid #222; vertical-align: 1px; }
.scroller { flex: 1; min-height: 0; display: flex; }
table { width: 211px; height: 100%; border-collapse: collapse; }
td { padding: 0; border-bottom: 1px solid #eee; line-height: 12px; }
td:first-child { width: 158px; border-right: 1px solid #e4e4e4; }
td:last-child { padding-left: 3px; }
td svg { display: block; width: 12px; height: 12px; }
tr { background: #fff; }
tr:nth-child(even) { background: #fafafa; }
td label { position: relative; display: flex; align-items: center; gap: 2px; padding-left: 31px; white-space: nowrap; color: #222; }
td label svg { flex: none; }
td label::before { content: ""; position: absolute; left: 22px; top: -2px; width: 7px; height: 9px; border-left: 1px dotted #bbb; border-bottom: 1px solid #ddd; }
td label::after { content: ""; position: absolute; left: 22px; top: 7px; height: 8px; border-left: 1px dotted #bbb; }
.dim label { color: #a2a2a2; }
input { flex: none; appearance: none; width: 10px; height: 10px; margin: 0; border: 1px solid #333; background: #fff; }
input::before { content: ""; display: block; width: 8px; height: 8px; background: #11953a; clip-path: polygon(0 55%, 20% 30%, 42% 52%, 85% 0, 100% 15%, 45% 100%); }
.vbar { width: 12px; display: flex; flex-direction: column; align-items: center; padding: 5px 0 5px; background: #f3f3f3; }
.vbar .thumb { flex: none; width: 11px; height: 62%; margin: auto 0 18px; border: 1px solid #aaa; border-radius: 1px; background: repeating-linear-gradient(#777 0 1px, transparent 1px 2px) center / 5px 5px no-repeat, linear-gradient(90deg, #f7f7f7, #d8d8d8); }
.hbar { flex: none; display: flex; align-items: center; height: 14px; padding: 0 19px 0 5px; background: #f3f3f3; }
.hbar .thumb { width: 120px; height: 12px; margin: 0 auto 0 7px; border: 1px solid #aaa; border-radius: 1px; background: repeating-linear-gradient(90deg, #777 0 1px, transparent 1px 2px) center / 5px 5px no-repeat, linear-gradient(#f7f7f7, #d8d8d8); }

.viewport { background: linear-gradient(#b2b4b6, #c3c5c7 25%, #dcdee0 60%, #e7e8ea 75%, #e8e9eb); overflow: hidden; }
.viewport svg { display: block; width: 100%; height: 100%; }
.axis { font: 9px "Liberation Sans", sans-serif; }
.status { flex: none; height: 13px; padding-left: 2px; border-top: 1px solid #aaa; border-bottom: 1px solid #999; background: #fff; color: #111; font-family: Lato, sans-serif; font-weight: bold; line-height: 12px; }
```
